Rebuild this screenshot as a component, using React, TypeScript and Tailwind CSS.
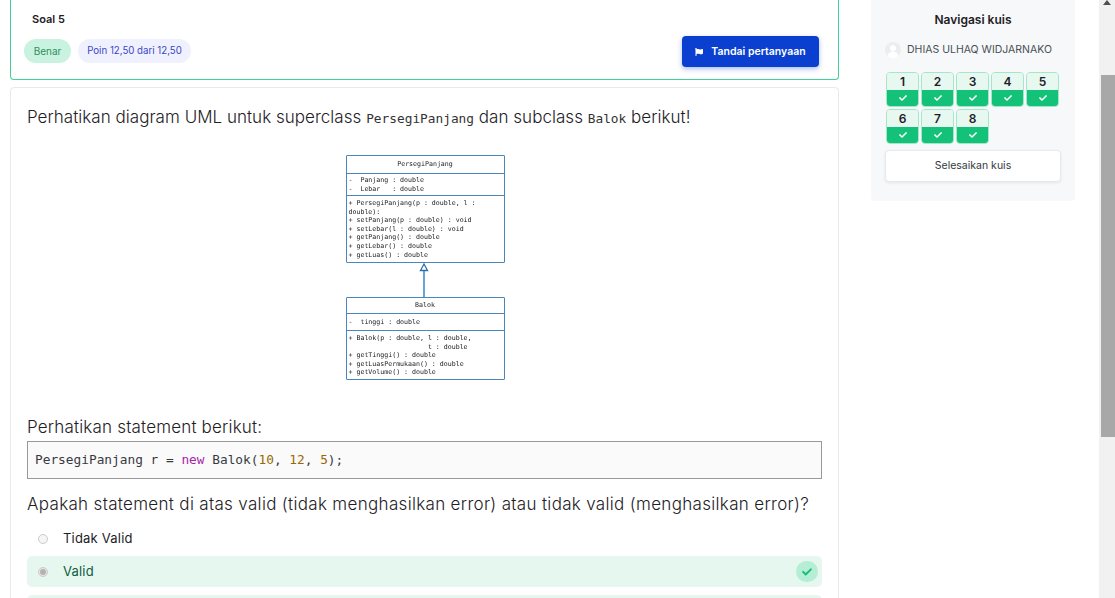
import { FaCheck, FaFlag } from "react-icons/fa";

const sans = "font-['Inter','Noto_Sans',sans-serif]";
const mono = "font-['DejaVu_Sans_Mono',monospace]";

function NavCell({ n }: { n: number }) {
  return (
    <div className="w-[33px] h-[35px] flex flex-col rounded-[4px] border border-[#a3e6c8] overflow-hidden">
      <div className="h-[17px] bg-[#e7f8f1] flex items-center justify-center text-[12px] font-semibold text-[#1d2125]">
        {n}
      </div>
      <div className="flex-1 bg-[#14c178] flex items-center justify-center text-white">
        <FaCheck className="w-[8px] h-[8px]" />
      </div>
    </div>
  );
}

function UmlBox({ title, titleClass, attrs, attrsClass, methods, methodsClass }: {
  title: string;
  titleClass: string;
  attrs: string[];
  attrsClass: string;
  methods: string[];
  methodsClass: string;
}) {
  return (
    <div className={`w-[159px] border border-[#4a86bb] rounded-[1px] bg-white ${mono} text-[6.6px] leading-[8.6px] text-[#222] blur-[0.3px]`}>
      <div className={`flex items-center justify-center ${titleClass}`}>{title}</div>
      <div className={`border-t border-[#4a86bb] px-[2px] whitespace-pre ${attrsClass}`}>
        {attrs.map((l) => (
          <div key={l}>{l}</div>
        ))}
      </div>
      <div className={`border-t border-[#4a86bb] px-[2px] pt-[3px] whitespace-pre ${methodsClass}`}>
        {methods.map((l) => (
          <div key={l}>{l}</div>
        ))}
      </div>
    </div>
  );
}

export default function App() {
  return (
    <div className={`h-[598px] w-[1115px] overflow-hidden flex bg-white text-[#1d2125] ${sans}`}>
      <main className="w-[829px] ml-[10px] shrink-0">
        <div className="h-[80px] border-x border-b border-[#3fd195] rounded-b-[4px] px-[13px] relative">
          <div className="pl-[8px] pt-[12px] text-[11px] leading-[14px] font-semibold text-[#1d2125]">Soal 5</div>
          <div className="flex justify-between mt-[13px] pr-[6px]">
            <div className="flex gap-[7px] text-[10px]">
              <span className="h-[24px] w-[47px] rounded-full bg-[#c9f2e0] text-[#2f8f5f] flex items-center justify-center">Benar</span>
              <span className="h-[24px] w-[113px] rounded-full bg-[#eff2fe] text-[#3b45c8] text-[9.7px] flex items-center justify-center">Poin 12,50 dari 12,50</span>
            </div>
            <button className="-mt-[3px] w-[137px] h-[31px] rounded-[4px] bg-[#0a3fcf] text-white text-[10.5px] font-semibold flex items-center justify-center gap-[8px] shadow-[0_2px_5px_rgba(10,63,207,0.35)]">
              <FaFlag className="w-[8px] h-[8px]" />
              Tandai pertanyaan
            </button>
          </div>
        </div>

        <div className="mt-[7px] border border-[#e8e9ea] rounded-t-[4px] px-[16px] pt-[18px] h-[600px]">
          <p className="text-[17px] leading-[22px] font-light tracking-[0.03px]">
            Perhatikan diagram UML untuk superclass <code className={`${mono} text-[12.8px] font-normal tracking-normal text-[#333]`}>PersegiPanjang</code> dan subclass <code className={`${mono} text-[12.8px] font-normal tracking-normal text-[#333]`}>Balok</code> berikut!
          </p>

          <div className="flex flex-col items-center mt-[25px] pl-[1px]">
            <UmlBox
              title="PersegiPanjang"
              titleClass="h-[17px]"
              attrs={["-  Panjang : double", "-  Lebar   : double"]}
              attrsClass="h-[22px] py-[2px]"
              methods={[
                "+ PersegiPanjang(p : double, l :",
                "double):",
                "+ setPanjang(p : double) : void",
                "+ setLebar(l : double) : void",
                "+ getPanjang() : double",
                "+ getLebar() : double",
                "+ getLuas() : double",
              ]}
              methodsClass="h-[67px]"
            />
            <svg width="12" height="34" viewBox="0 0 12 34" className="block -ml-[3px]">
              <path d="M6 7V34" stroke="#3f8fcb" strokeWidth="1.6" />
              <path d="M6 1L2.500 7.500H9.500Z" fill="white" stroke="#2f6fa8" strokeWidth="1.3" />
            </svg>
            <UmlBox
              title="Balok"
              titleClass="h-[15px]"
              attrs={["-  tinggi : double"]}
              attrsClass="h-[17px] py-[4px]"
              methods={[
                "+ Balok(p : double, l : double,",
                "                    t : double",
                "+ getTinggi() : double",
                "+ getLuasPermukaan() : double",
                "+ getVolume() : double",
              ]}
              methodsClass="h-[49px]"
            />
          </div>

          <p className="mt-[36px] text-[17px] leading-[22px] font-light tracking-[0.18px]">Perhatikan statement berikut:</p>
          <pre className={`mt-[3px] h-[38px] border border-[#999] bg-[#fafafa] px-[7px] flex items-center text-[12.8px] text-[#383a42] ${mono}`}>
            PersegiPanjang r =&nbsp;<span className="text-[#a626a4]">new</span>&nbsp;Balok(<span className="text-[#986801]">10</span>, <span className="text-[#986801]">12</span>, <span className="text-[#986801]">5</span>);
          </pre>

          <p className="mt-[14px] text-[17px] leading-[22px] font-light tracking-[0.32px]">
            Apakah statement di atas valid (tidak menghasilkan error) atau tidak valid (menghasilkan error)?
          </p>

          <div className="mt-[8px] h-[32px] flex items-center pl-[11px] gap-[15px] text-[13px] tracking-[0.2px]">
            <span className="w-[10px] h-[10px] rounded-full border border-[#ccc] bg-[#f5f5f5]" />
            Tidak Valid
          </div>
          <div className="mt-[1px] h-[31px] flex items-center pl-[11px] gap-[15px] text-[13px] tracking-[0.2px] bg-[#e6f7f0] rounded-[5px] text-[#0f5c3d] relative">
            <span className="w-[10px] h-[10px] rounded-full border border-[#ccc] bg-[#e6e6e6] flex items-center justify-center">
              <span className="w-[6px] h-[6px] rounded-full bg-[#b3b3b3]" />
            </span>
            Valid
            <span className="absolute right-[4px] top-[5px] w-[22px] h-[21px] rounded-full bg-[#b5edd5] flex items-center justify-center text-[#14c178]">
              <FaCheck className="w-[10px] h-[10px]" />
            </span>
          </div>
          <div className="mt-[8px] h-[31px] bg-[#e6f7f0] rounded-[5px]" />
        </div>
      </main>

      <aside className="ml-[32px] w-[204px] h-[201px] shrink-0 bg-[#f7f8f9] rounded-b-[4px] px-[14px]">
        <div className="pt-[13px] text-center text-[12px] leading-[14px] font-semibold">Navigasi kuis</div>
        <div className="mt-[15px] flex items-center gap-[6px] text-[10.5px] text-[#495057]">
          <svg width="16" height="16" viewBox="0 0 16 16">
            <circle cx="8" cy="8" r="8" fill="#eceded" />
            <circle cx="8" cy="6.2" r="3" fill="white" />
            <path d="M2.5 14c.5-3 2.7-4.5 5.5-4.5s5 1.500 5.500 4.500a8 8 0 0 1-11 0Z" fill="white" />
          </svg>
          DHIAS ULHAQ WIDJARNAKO
        </div>
        <div className="mt-[14px] ml-[1px] grid grid-cols-[repeat(5,33px)] gap-[2px]">
          {[1, 2, 3, 4, 5, 6, 7, 8].map((n) => (
            <NavCell key={n} n={n} />
          ))}
        </div>
        <button className="mt-[6px] w-[176px] h-[32px] bg-white rounded-[4px] border border-[#e6e9ef] shadow-[0_1px_3px_rgba(0,0,0,0.08)] text-[10.5px] text-[#343a40]">
          Selesaikan kuis
        </button>
      </aside>

      <div className="ml-auto w-[16px] bg-[#f1f1f1] shrink-0 flex flex-col items-center">
        <svg width="8" height="5" viewBox="0 0 8 5" className="block">
          <path d="M4 0L8 5H0Z" fill="#505050" />
        </svg>
        <div className="mt-[70px] ml-[2px] w-[14px] h-[362px] bg-[#a8a8a8]" />
      </div>
    </div>
  );
}
